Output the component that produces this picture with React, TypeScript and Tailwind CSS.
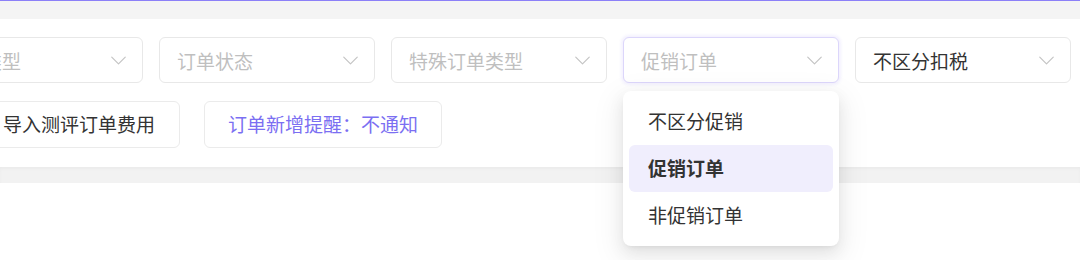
import React from "react";
import { ChevronDown } from "lucide-react";

const marks: { x: number; y: number }[] = [];
for (let c = 0; c < 10; c++) {
  for (let r = 0; r < 3; r++) {
    marks.push({ x: 60 + c * 110, y: (c % 2 === 0 ? 25 : 120) + r * 170 });
  }
}

const Select = ({
  label,
  filled,
  focused,
  children,
}: {
  label: string;
  filled?: boolean;
  focused?: boolean;
  children?: React.ReactNode;
}) => (
  <div
    className={`relative shrink-0 w-[216px] h-[46px] rounded-md border bg-white flex items-center justify-between pl-[17px] pr-[10px] ${
      focused
        ? "border-[#dcd6fb] shadow-[0_0_3px_2px_rgba(124,104,245,0.09)]"
        : "border-[#e8e8e8]"
    }`}
  >
    <span
      className={`text-[19px] leading-none ${
        filled ? "text-[#333333]" : "text-[#bfbfbf]"
      }`}
    >
      {label}
    </span>
    <ChevronDown className="w-[27px] h-[27px] text-[#c4c4c4]" strokeWidth={1.05} />
    {children}
  </div>
);

const options = ["不区分促销", "促销订单", "非促销订单"];

export default function App() {
  return (
    <div className="relative w-[1080px] h-[260px] overflow-hidden bg-white font-['Noto_Sans_CJK_SC',sans-serif]">
      <div className="h-px bg-[#8c80f8]" />
      <div className="h-[18px] bg-[#f4f4f4]" />

      <div className="bg-white pt-[18px] pb-[19px]">
        <div className="flex gap-4 -ml-[73px]">
          <Select label="订单类型" />
          <Select label="订单状态" />
          <Select label="特殊订单类型" />
          <Select label="促销订单" focused>
            <div className="absolute left-[-1px] top-[calc(100%+9px)] z-10 w-[216px] rounded-lg bg-white px-[6px] py-[7px] shadow-[0_6px_16px_rgba(0,0,0,0.08),0_3px_6px_-4px_rgba(0,0,0,0.12),0_9px_28px_8px_rgba(0,0,0,0.05)]">
              {options.map((o) => (
                <div
                  key={o}
                  className={`h-[47px] rounded-md px-[19px] flex items-center text-[19px] text-[#333333] ${
                    o === "促销订单" ? "bg-[#f0eefd] font-semibold" : ""
                  }`}
                >
                  {o}
                </div>
              ))}
            </div>
          </Select>
          <Select label="不区分扣税" filled />
        </div>

        <div className="flex gap-6 mt-[18px] -ml-[22px]">
          <button className="shrink-0 h-[47px] rounded-md border border-[#ebebeb] bg-white px-6 text-[19px] text-[#333333]">
            导入测评订单费用
          </button>
          <button className="shrink-0 h-[47px] rounded-md border border-[#ebebeb] bg-white px-[23px] text-[19px] text-[#7b6ff2]">
            订单新增提醒：不通知
          </button>
        </div>
      </div>

      <div className="h-4 bg-[#f2f2f2] shadow-[inset_0_2px_3px_rgba(0,0,0,0.03)]" />

      <div className="pointer-events-none absolute inset-0">
        {marks.map((m, i) => (
          <span
            key={i}
            className="absolute text-[17px] text-[rgba(0,0,0,0.025)] -rotate-[30deg] font-['Liberation_Sans',sans-serif]"
            style={{ left: m.x, top: m.y }}
          >
            89420
          </span>
        ))}
      </div>
    </div>
  );
}
